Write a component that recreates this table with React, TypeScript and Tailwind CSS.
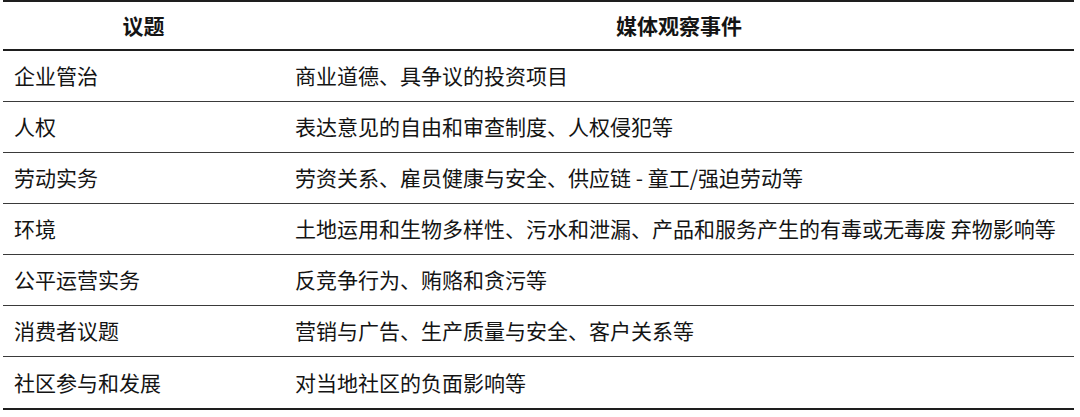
import React from "react";

const rows: [string, string][] = [
  ["企业管治", "商业道德、具争议的投资项目"],
  ["人权", "表达意见的自由和审查制度、人权侵犯等"],
  ["劳动实务", "劳资关系、雇员健康与安全、供应链 - 童工/强迫劳动等"],
  ["环境", "土地运用和生物多样性、污水和泄漏、产品和服务产生的有毒或无毒废 弃物影响等"],
  ["公平运营实务", "反竞争行为、贿赂和贪污等"],
  ["消费者议题", "营销与广告、生产质量与安全、客户关系等"],
  ["社区参与和发展", "对当地社区的负面影响等"],
];

export default function App() {
  return (
    <div
      className="w-[1080px] h-[417px] bg-white overflow-hidden text-[#141414]"
      style={{ fontFamily: '"Noto Sans CJK SC", "Noto Sans", sans-serif' }}
    >
      <div className="ml-[3px] w-[1071px] border-t-2 border-[#1e1e1e] border-b-2">
        <div className="flex h-[49px] items-center border-b-2 border-[#1e1e1e] font-bold text-[21px]">
          <div className="w-[281px] text-center">议题</div>
          <div className="flex-1 text-center">媒体观察事件</div>
        </div>
        {rows.map(([a, b], i) => (
          <div
            key={a}
            className={
              i < rows.length - 1
                ? "flex h-[51px] items-center border-b border-[#3a3a3a] text-[21px]"
                : "flex h-[51px] items-center text-[21px]"
            }
          >
            <div className="w-[281px] pl-[11px] whitespace-nowrap">{a}</div>
            <div className="flex-1 pl-[11px] whitespace-nowrap">{b}</div>
          </div>
        ))}
      </div>
    </div>
  );
}
